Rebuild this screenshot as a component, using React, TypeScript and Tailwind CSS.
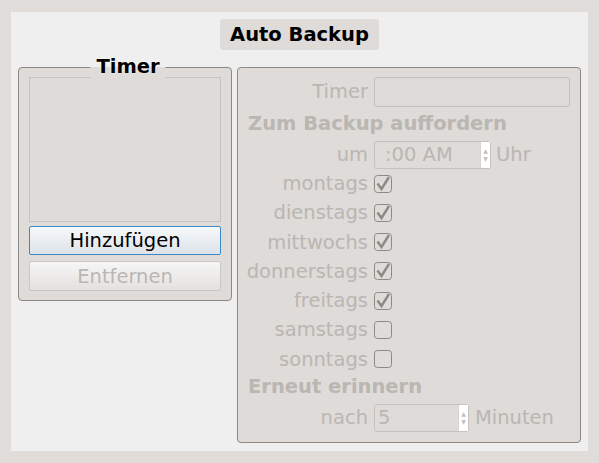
import type { ReactNode } from "react";

const font = "font-['DejaVu_Sans',sans-serif]";

function CheckBox({ checked }: { checked: boolean }) {
  return (
    <svg width="18" height="18" viewBox="0 0 18 18" className="block overflow-visible">
      <rect x="0.5" y="0.5" width="17" height="17" rx="3" fill="none" stroke="#8d8985" />
      {checked && (
        <path d="M3.5 8.5 L7.5 14 L15 2" fill="none" stroke="#8d8985" strokeWidth="2.4" />
      )}
    </svg>
  );
}

function SpinBox({ value, width, pad }: { value: string; width: string; pad: string }) {
  return (
    <div className={`flex h-[28px] ${width} rounded-[3px] border border-[#c5c1bd] bg-[#dedbd8]`}>
      <div className={`flex-1 ${pad} leading-[26px] text-[#bab6b2]`}>{value}</div>
      <div className="flex w-[10px] flex-col items-center justify-center border-l border-[#d6d3d0] bg-white text-[6px] leading-[8px] text-[#c4c0bc]">
        <span>▲</span>
        <span>▼</span>
      </div>
    </div>
  );
}

function Row({ label, h, children }: { label: string; h: string; children: ReactNode }) {
  return (
    <div className={`flex ${h} items-center`}>
      <div className="w-[136px] pr-[6px] text-right">{label}</div>
      <div className="flex items-center gap-[5px]">{children}</div>
    </div>
  );
}

const days: [string, boolean][] = [
  ["montags", true],
  ["dienstags", true],
  ["mittwochs", true],
  ["donnerstags", true],
  ["freitags", true],
  ["samstags", false],
  ["sonntags", false],
];

export default function App() {
  return (
    <div className={`${font} h-[463px] w-[599px] bg-[#dfdcd9] pb-[12px] pl-[11px] pr-[11px] pt-[12px] text-[19.5px]`}>
      <div className="flex h-full flex-col bg-[#efefef] px-[7px] pt-[7px]">
        <div className="flex justify-center">
          <div className="flex h-[31px] w-[159px] items-center justify-center rounded-[3px] bg-[#dedbd8] font-bold text-black">
            Auto Backup
          </div>
        </div>

        <div className="mt-[17px] flex gap-[5px]">
          {/* left: timer list */}
          <div className="relative h-[234px] w-[214px] rounded-[4px] border border-[#8c8884] bg-[#dedbd8] px-[10px] pb-[9px] pt-[9px]">
            <span className="absolute left-1/2 top-[-13px] translate-x-[-46%] bg-[linear-gradient(#efefef_50%,#dedbd8_50%)] px-[6px] font-bold leading-[24px] text-black [text-shadow:0_0_2px_#fff]">
              Timer
            </span>
            <div className="h-[145px] border border-[#c6c2be] bg-[#dedbd8]" />
            <button
              type="button"
              className="mt-[4px] block h-[29px] w-full rounded-[2px] border border-[#3d88c6] bg-[linear-gradient(#f7f8fa,#dde3e9)] leading-[26px] text-black"
            >
              Hinzufügen
            </button>
            <button
              type="button"
              className="mt-[6px] block h-[30px] w-full rounded-[2px] border border-[#cac6c2] bg-[linear-gradient(#f6f6f6,#e3e1df)] leading-[27px] text-[#bab6b2]"
            >
              Entfernen
            </button>
          </div>

          {/* right: settings (disabled) */}
          <div className="h-[376px] w-[344px] rounded-[4px] border border-[#8c8884] bg-[#dedbd8] pt-[9px] text-[#bab6b2]">
            <Row label="Timer" h="h-[30px]">
              <div className="h-[30px] w-[196px] rounded-[3px] border border-[#c5c1bd] bg-[#dedbd8]" />
            </Row>
            <div className="flex h-[34px] items-center pl-[10px] font-bold">Zum Backup auffordern</div>
            <Row label="um" h="h-[28px]">
              <SpinBox value=":00 AM" width="w-[117px]" pad="pl-[10px]" />
              <span>Uhr</span>
            </Row>
            <div className="flex h-[200px] flex-col">
              {days.map(([d, c]) => (
                <div key={d} className="flex flex-1 items-center">
                  <div className="w-[136px] pr-[6px] text-right">{d}</div>
                  <CheckBox checked={c} />
                </div>
              ))}
            </div>
            <div className="flex h-[35px] items-center pl-[10px] font-bold">Erneut erinnern</div>
            <Row label="nach" h="h-[28px]">
              <SpinBox value="5" width="w-[95px]" pad="pl-[3px]" />
              <span className="ml-[1px]">Minuten</span>
            </Row>
          </div>
        </div>
      </div>
    </div>
  );
}
